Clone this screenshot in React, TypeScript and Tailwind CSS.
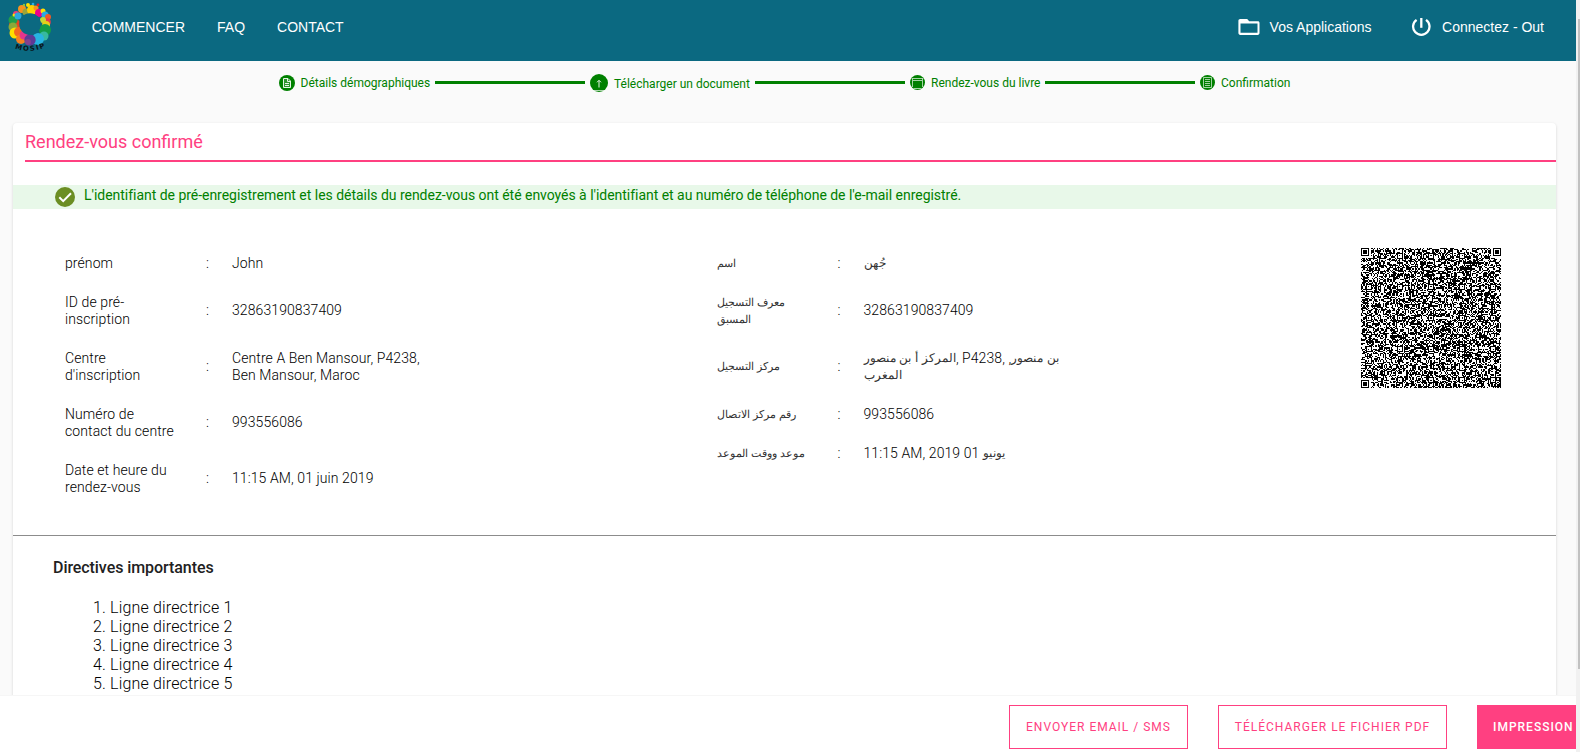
import React from "react";

const QR_SIZE = 117;
const ALIGN = [6, 32, 58, 84, 110];

function buildQrPath(): string {
  let seed = 71993;
  const rand = () => {
    seed = (seed * 1664525 + 1013904223) >>> 0;
    return seed / 4294967296;
  };
  const grid: boolean[][] = [];
  for (let y = 0; y < QR_SIZE; y++) {
    const row: boolean[] = [];
    for (let x = 0; x < QR_SIZE; x++) row.push(rand() < 0.54);
    grid.push(row);
  }
  for (let i = 8; i < QR_SIZE - 8; i++) {
    grid[6][i] = i % 2 === 0;
    grid[i][6] = i % 2 === 0;
  }
  const square = (cx: number, cy: number, r: number, darkAt: (d: number) => boolean) => {
    for (let dy = -r; dy <= r; dy++) {
      for (let dx = -r; dx <= r; dx++) {
        const x = cx + dx;
        const y = cy + dy;
        if (x < 0 || y < 0 || x >= QR_SIZE || y >= QR_SIZE) continue;
        grid[y][x] = darkAt(Math.max(Math.abs(dx), Math.abs(dy)));
      }
    }
  };
  const last = QR_SIZE - 4;
  ALIGN.forEach((cx, i) =>
    ALIGN.forEach((cy, j) => {
      const corner = (i === 0 && j === 0) || (i === 4 && j === 0) || (i === 0 && j === 4);
      if (!corner) square(cx, cy, 2, (d) => d !== 1);
    }),
  );
  [[3, 3], [last, 3], [3, last]].forEach(([cx, cy]) => square(cx, cy, 4, (d) => d < 2 || d === 3));

  let path = "";
  for (let y = 0; y < QR_SIZE; y++) {
    let x = 0;
    while (x < QR_SIZE) {
      if (!grid[y][x]) {
        x++;
        continue;
      }
      const start = x;
      while (x < QR_SIZE && grid[y][x]) x++;
      path += `M${start} ${y}h${x - start}v1h-${x - start}z`;
    }
  }
  return path;
}

const qrPath = buildQrPath();

function QrCode() {
  return (
    <svg viewBox="0 0 117 117" className="h-[140px] w-[140px]" shapeRendering="crispEdges">
      <path d={qrPath} fill="#000" />
    </svg>
  );
}

const bubbles: [number, number, number, string][] = [
  [15, 25, 6, "#e8451f"],
  [13, 20, 4.5, "#1fa04b"],
  [13, 27, 4.5, "#8aa83a"],
  [15, 33, 5.5, "#ffdf00"],
  [19, 32, 5, "#f26a21"],
  [21, 39, 5, "#f58220"],
  [24, 35, 4.5, "#e5358b"],
  [16, 14, 3, "#ee3a7c"],
  [14, 15, 1.5, "#ffe100"],
  [18, 16, 3.5, "#2aa9e0"],
  [22, 9, 4, "#f7931e"],
  [26, 12, 3.5, "#9aa43a"],
  [32, 10, 5, "#ffd200"],
  [36, 8, 2.5, "#f7931e"],
  [28, 5, 2, "#ffe100"],
  [33, 4, 1.3, "#29abe2"],
  [38, 5, 1.4, "#ed1c24"],
  [24, 5, 1.2, "#8cc63f"],
  [39, 13, 4, "#ec008c"],
  [43, 11, 2.5, "#ffe100"],
  [45, 15, 3.5, "#29abe2"],
  [48, 17, 3, "#f15a24"],
  [47, 22, 3.8, "#e23b4e"],
  [43, 20, 3, "#c8d832"],
  [46, 25, 4, "#e6cf18"],
  [45, 30, 6, "#139b48"],
  [44, 36, 4.5, "#37b8a0"],
  [38, 39, 6, "#27b4e2"],
  [30, 40, 5.7, "#5e3a96"],
  [28, 42, 3, "#82418f"],
];

function Logo() {
  return (
    <svg viewBox="0 0 60 60" className="h-[60px] w-[60px] shrink-0">
      {bubbles.map(([cx, cy, r, fill], i) => (
        <circle key={i} cx={cx} cy={cy} r={r} fill={fill} />
      ))}
      <circle cx="30" cy="24" r="10.8" fill="#0b6981" />
      <defs>
        <path id="logo-arc" d="M13 47.5Q30 55 48.5 45.8" />
      </defs>
      <text fontFamily="DejaVu Sans, sans-serif" fontSize="7" fontWeight="700" fill="#0a1418">
        <textPath href="#logo-arc" startOffset="2" textLength="31">
          MOSIP
        </textPath>
      </text>
    </svg>
  );
}

function Header() {
  return (
    <header className="flex h-[61px] shrink-0 items-start bg-[#0b6981] font-['Liberation_Sans',sans-serif] text-sm text-white">
      <Logo />
      <nav className="ml-[31.7px] flex gap-8 pt-[17px]">
        <a>COMMENCER</a>
        <a>FAQ</a>
        <a>CONTACT</a>
      </nav>
      <div className="ml-auto flex pr-8 pt-[17px]">
        <a className="flex items-center">
          <svg viewBox="0 0 24 20" className="-my-1 mr-[8.5px] h-5 w-6" fill="#fff">
            <path
              fillRule="evenodd"
              d="M3.2 2h7l2 2.2h8.6c1.1 0 1.7.7 1.7 1.7V16c0 1.1-.7 1.9-1.7 1.9H3.2c-1 0-1.8-.8-1.8-1.9V3.9C1.4 2.7 2.2 2 3.2 2zm.3 4.4v9.4h17V6.4z"
            />
          </svg>
          Vos Applications
        </a>
        <a className="ml-[39.5px] flex items-center">
          <svg viewBox="0 0 20 20" className="-my-1 mr-[11px] h-5 w-5" fill="none" stroke="#fff" strokeWidth="2.3">
            <path d="M10.3 1v9.8" />
            <path d="M5.6 2.9A8.2 8.2 0 1 0 15 2.9" />
          </svg>
          Connectez - Out
        </a>
      </div>
    </header>
  );
}

function Connector() {
  return <span className="h-[3px] w-[150px] shrink-0 bg-[#008000]" />;
}

function Stepper() {
  return (
    <div className="flex h-[43px] w-full shrink-0 items-center whitespace-nowrap pl-[279px] text-[12px] text-[#008000]">
      <div className="flex w-[156px] items-center">
        <svg viewBox="0 0 16 16" className="mr-[5.6px] h-4 w-4">
          <circle cx="8" cy="8" r="8" fill="#008000" />
          <path d="M4.5 3.5h4.5l2.5 2.5v6.5h-7z" fill="#2f942f" stroke="#e7f3e7" />
          <path d="M8.5 3.5v3h3M6 8.5h4M6 10.5h4" fill="none" stroke="#e7f3e7" />
        </svg>
        <span>Détails démographiques</span>
      </div>
      <Connector />
      <div className="ml-[5px] flex w-[165px] items-center">
        <svg viewBox="0 0 18 18" className="mr-[6px] h-[18px] w-[18px]">
          <circle cx="9" cy="9" r="9" fill="#008000" />
          <path d="M9 6.5v7M7 8.3l2-2 2 2" fill="none" stroke="#e7f3e7" />
          <path d="M4 16.5h10" stroke="#d7ecd7" strokeWidth=".8" />
        </svg>
        <span className="pt-[2px]">Télécharger un document</span>
      </div>
      <Connector />
      <div className="ml-[5px] flex w-[135px] items-center">
        <svg viewBox="0 0 15 15" className="mr-[6px] h-[15px] w-[15px]">
          <circle cx="7.5" cy="7.5" r="7.5" fill="#008000" />
          <path d="M2.5 3.5h10M3 5.5h9M2.5 3v9M12.5 3v9M3.5 13.5h8" fill="none" stroke="#cfe8cf" strokeWidth=".8" />
        </svg>
        <span>Rendez-vous du livre</span>
      </div>
      <Connector />
      <div className="ml-[5px] flex items-center">
        <svg viewBox="0 0 15 15" className="mr-[6px] h-[15px] w-[15px]">
          <circle cx="7.5" cy="7.5" r="7.5" fill="#008000" />
          <path d="M3.5 2.5h8v10h-8zM5 4.5h5M5 6.5h5M5 8.5h5M5 10.5h5" fill="none" stroke="#c9e5c9" strokeWidth=".8" />
        </svg>
        <span>Confirmation</span>
      </div>
    </div>
  );
}

type Row = { label: React.ReactNode; value: React.ReactNode };

const frenchRows: Row[] = [
  { label: "prénom", value: "John" },
  { label: <>ID de pré-<br />inscription</>, value: "32863190837409" },
  { label: <>Centre<br />d'inscription</>, value: <>Centre A Ben Mansour, P4238,<br />Ben Mansour, Maroc</> },
  { label: <>Numéro de<br />contact du centre</>, value: "993556086" },
  { label: <>Date et heure du<br />rendez-vous</>, value: "11:15 AM, 01 juin 2019" },
];

function Ar({ children }: { children: React.ReactNode }) {
  return (
    <bdi className="align-[1px] font-['DejaVu_Sans',sans-serif] text-[11px] leading-none tracking-normal text-[#333] in-[dd]:text-[12px]">
      {children}
    </bdi>
  );
}

const arabicRows: Row[] = [
  { label: <Ar>اسم</Ar>, value: <Ar>جُهن</Ar> },
  { label: <><Ar>معرف التسجيل</Ar><br /><Ar>المسبق</Ar></>, value: "32863190837409" },
  {
    label: <Ar>مركز التسجيل</Ar>,
    value: <><Ar>المركز أ بن منصور</Ar>, P4238, ,<Ar>بن منصور</Ar><br /><Ar>المغرب</Ar></>,
  },
  { label: <Ar>رقم مركز الاتصال</Ar>, value: "993556086" },
  { label: <Ar>موعد ووقت الموعد</Ar>, value: <>11:15 AM, 2019 01 <Ar>يونيو</Ar></> },
];

function Details({ rows, className }: { rows: Row[]; className: string }) {
  return (
    <dl className={className}>
      {rows.map((row, i) => (
        <div key={i} className="flex items-center whitespace-nowrap py-[11px] leading-[17px]">
          <dt className="w-[141px] in-[.rtl-side]:w-[121px]">{row.label}</dt>
          <span className="w-[26px]">:</span>
          <dd>{row.value}</dd>
        </div>
      ))}
    </dl>
  );
}

export default function App() {
  return (
    <div className="flex h-[752px] w-[1580px] overflow-hidden bg-[#fafafa] font-[Roboto,sans-serif] text-[#212121]">
      <div className="flex w-[1576px] flex-col overflow-hidden">
        <Header />
        <Stepper />
        <main className="min-h-0 flex-1 overflow-hidden pl-[13px] pr-5 pt-[19px]">
          <section className="h-[800px] rounded-[4px] bg-white shadow-[0_1px_3px_rgba(0,0,0,0.16)]">
            <h1 className="ml-3 h-[39px] border-b-2 border-[#ff4081] pt-[7px] text-[18px] leading-6 text-[#ff4081]">
              Rendez-vous confirmé
            </h1>
            <div className="mt-[23px] flex h-6 bg-[#e8f8e9] pl-[42px] text-[14px] text-[#008000]">
              <svg viewBox="0 0 20 20" className="mr-[9px] mt-[2px] h-5 w-5">
                <circle cx="10" cy="10" r="10" fill="#6b8e23" />
                <path d="M4.3 10.3l3.9 3.9 7.8-8" fill="none" stroke="#fff" strokeWidth="2" />
              </svg>
              <span className="leading-5 tracking-[-0.03px]">
                L'identifiant de pré-enregistrement et les détails du rendez-vous ont été envoyés à l'identifiant et au numéro de téléphone de l'e-mail enregistré.
              </span>
            </div>
            <div className="flex h-[327px] items-start border-b border-[#8c8c8c] pl-[52px] pt-[34.5px] text-[14px] font-light tracking-[0.09px] text-black">
              <Details rows={frenchRows} className="w-[651.5px]" />
              <Details rows={arabicRows} className="rtl-side" />
              <div className="ml-auto mr-[55px] mt-[4.5px]">
                <QrCode />
              </div>
            </div>
            <h2 className="ml-10 mt-[22px] text-[16px] font-medium leading-5 tracking-[-0.07px]">Directives importantes</h2>
            <ol className="ml-20 mt-5 text-[16px] font-light leading-[19px] tracking-[0.16px] text-black">
              {[1, 2, 3, 4, 5].map((n) => (
                <li key={n}>{n}. Ligne directrice {n}</li>
              ))}
            </ol>
          </section>
        </main>
        <footer className="flex h-[57px] shrink-0 items-start justify-end gap-[30px] whitespace-nowrap border-t border-[#f6f6f6] bg-white pt-[9px] text-[12px] tracking-[1px] text-[#ff4081]">
          <button className="h-11 w-[179px] border border-[#ff4081]">ENVOYER EMAIL / SMS</button>
          <button className="h-11 w-[229px] border border-[#ff4081]">TÉLÉCHARGER LE FICHIER PDF</button>
          <button className="h-11 w-[99px] bg-[#ff4081] pl-4 text-left font-medium text-white">IMPRESSION</button>
        </footer>
      </div>
      <div className="flex w-1 justify-end bg-[#f1f1f1] pt-[19px]">
        <div className="h-[650px] w-[2px] bg-[#c1c1c1]" />
      </div>
    </div>
  );
}
